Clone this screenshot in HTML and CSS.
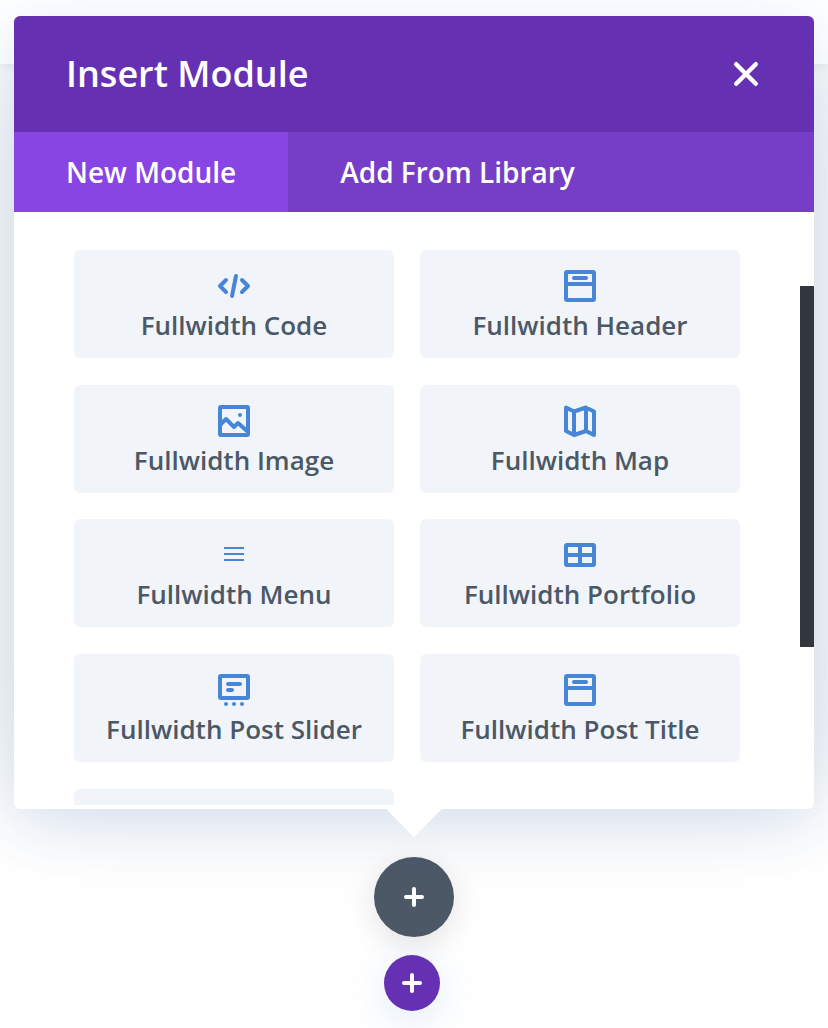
FILE: index.html
```html
<!DOCTYPE html>
<html lang="en">
<head>
    <meta charset="UTF-8">
    <meta name="viewport" content="width=device-width, initial-scale=1.0">
    <title>Insert Module</title>
    <link rel="stylesheet" href="styles.css">
</head>
<body>
    <div class="page-shade"></div>
    <div class="page-bar"></div>
    <main class="builder">
        <section class="modal">
            <header class="modal-header">
                <h1>Insert Module</h1>
                <button class="close" aria-label="Close">
                    <svg width="28" height="28" viewBox="0 0 28 28"><path d="M4.2 4.2l19.6 19.6M23.8 4.2L4.2 23.8"/></svg>
                </button>
            </header>
            <nav class="tabs">
                <a class="tab active">New Module</a>
                <a class="tab">Add From Library</a>
            </nav>
            <div class="modal-body">
                <ul class="modules">
                    <li class="module">
                        <svg class="icon" viewBox="0 0 32 32"><path class="line" d="M8 10l-6 6 6 6M24 10l6 6-6 6M18 6l-4 20"/></svg>
                        <span>Fullwidth Code</span>
                    </li>
                    <li class="module">
                        <svg class="icon" viewBox="0 0 32 32"><rect class="line" x="2" y="2" width="28" height="28" rx="1"/><path class="line" d="M2 14h28M10 8h12"/></svg>
                        <span>Fullwidth Header</span>
                    </li>
                    <li class="module">
                        <svg class="icon" viewBox="0 0 32 32"><rect class="line" x="2" y="2" width="28" height="28" rx="1"/><path class="line" d="M2 20l6-6 8 8 4-4 9 8"/><circle cx="22" cy="10" r="2"/></svg>
                        <span>Fullwidth Image</span>
                    </li>
                    <li class="module">
                        <svg class="icon" viewBox="0 0 32 32"><path class="line" d="M2 2.5l8 4 12-4 8 4v23.5l-8-4-12 4-8-4zM10 6.5V30M22 2.5V26"/></svg>
                        <span>Fullwidth Map</span>
                    </li>
                    <li class="module">
                        <svg class="icon" viewBox="0 0 32 32"><path d="M6 8h20v2H6zM6 14h20v2H6zM6 20h20v2H6z"/></svg>
                        <span>Fullwidth Menu</span>
                    </li>
                    <li class="module">
                        <svg class="icon" viewBox="0 0 32 32"><rect class="line" x="2" y="6" width="28" height="20" rx="1"/><path class="line" d="M2 16h28M16 6v20"/></svg>
                        <span>Fullwidth Portfolio</span>
                    </li>
                    <li class="module">
                        <svg class="icon" viewBox="0 0 32 32"><rect class="line" x="2" y="2" width="28" height="22" rx="1"/><path class="line" d="M10 10h12M10 16h4"/><circle cx="8" cy="30" r="2"/><circle cx="16" cy="30" r="2"/><circle cx="24" cy="30" r="2"/></svg>
                        <span>Fullwidth Post Slider</span>
                    </li>
                    <li class="module">
                        <svg class="icon" viewBox="0 0 32 32"><rect class="line" x="2" y="2" width="28" height="28" rx="1"/><path class="line" d="M2 14h28M10 8h12"/></svg>
                        <span>Fullwidth Post Title</span>
                    </li>
                    <li class="module"></li>
                </ul>
                <div class="scroll-thumb"></div>
            </div>
        </section>
        <button class="add add-module" aria-label="Add module">
            <svg width="20" height="20" viewBox="0 0 20 20"><path d="M10 2v16M2 10h16"/></svg>
        </button>
        <button class="add add-section" aria-label="Add section">
            <svg width="20" height="20" viewBox="0 0 20 20"><path d="M10 2v16M2 10h16"/></svg>
        </button>
    </main>
</body>
</html>
```
FILE: styles.css
```css
* {
    margin: 0;
    padding: 0;
    box-sizing: border-box;
}
body {
    height: 1028px;
    position: relative;
    overflow: hidden;
    background-color: #fff;
    font-family: "Open Sans", sans-serif;
    font-weight: 600;
}
button {
    border: none;
    background: none;
}
/* page behind the modal */
.page-shade {
    position: absolute;
    top: 64px;
    left: 14px;
    right: 14px;
    height: 725px;
    box-shadow: 0 0 120px rgba(0, 0, 0, 0.12);
}
.page-bar {
    position: absolute;
    top: 0;
    left: 0;
    right: 0;
    height: 64px;
    background-color: #fff;
    box-shadow: 0 0 12px rgba(0, 0, 0, 0.1);
}
.builder {
    position: relative;
    display: flex;
    flex-direction: column;
    align-items: center;
    padding-top: 16px;
}
.modal {
    position: relative;
    width: 800px;
    height: 793px;
    display: flex;
    flex-direction: column;
    background-color: #fff;
    border-radius: 6px;
    box-shadow: 0 10px 60px rgba(43, 120, 218, 0.16);
}
.modal::after {
    content: "";
    position: absolute;
    top: 100%;
    left: 372px;
    border: 28px solid transparent;
    border-top-color: #fff;
    border-bottom: none;
}
.modal-header {
    height: 116px;
    display: flex;
    align-items: center;
    justify-content: space-between;
    padding: 0 54px 0 52px;
    background-color: #6531b2;
    border-radius: 6px 6px 0 0;
    color: #fff;
}
.modal-header h1 {
    font-size: 36px;
    font-weight: 600;
    line-height: 48px;
}
.close svg,
.add svg {
    display: block;
    fill: none;
    stroke: #fff;
    stroke-width: 4;
    stroke-linecap: round;
}
.close svg {
    stroke-width: 4.4;
}
.tabs {
    height: 80px;
    display: flex;
    background-color: #763ec7;
}
.tab {
    padding: 0 52px;
    font-size: 28px;
    line-height: 81px;
    height: 80px;
    color: #fff;
}
.tab.active {
    background-color: #8845e3;
}
.modal-body {
    position: relative;
    height: 593px;
    overflow: hidden;
    padding: 38px 60px 0;
}
.modules {
    display: grid;
    grid-template-columns: 320px 320px;
    grid-auto-rows: 108px;
    gap: 26.67px 26px;
    height: 555px;
    overflow: hidden;
    list-style: none;
}
.module {
    display: flex;
    flex-direction: column;
    align-items: center;
    padding-top: 20px;
    background-color: #f1f5fa;
    border-radius: 6px;
    font-size: 26px;
    line-height: 36px;
    color: #4c5866;
}
.icon {
    width: 32px;
    height: 32px;
    margin-bottom: 5px;
    overflow: visible;
    fill: #4785d7;
}
.icon .line {
    fill: none;
    stroke: #4785d7;
    stroke-width: 4;
    stroke-linecap: round;
    stroke-linejoin: round;
}
.scroll-thumb {
    position: absolute;
    top: 74px;
    right: 0;
    width: 14px;
    height: 361px;
    background-color: #33373d;
}
.add {
    display: flex;
    align-items: center;
    justify-content: center;
    border-radius: 50%;
}
.add-module {
    width: 80px;
    height: 80px;
    margin-top: 48px;
    background-color: #4c5866;
    box-shadow: 0 8px 32px rgba(0, 0, 0, 0.12);
}
.add-section {
    width: 56px;
    height: 56px;
    margin: 18px 4px 0 0;
    background-color: #6531b2;
    box-shadow: 0 10px 40px rgba(43, 120, 218, 0.15);
}
```
